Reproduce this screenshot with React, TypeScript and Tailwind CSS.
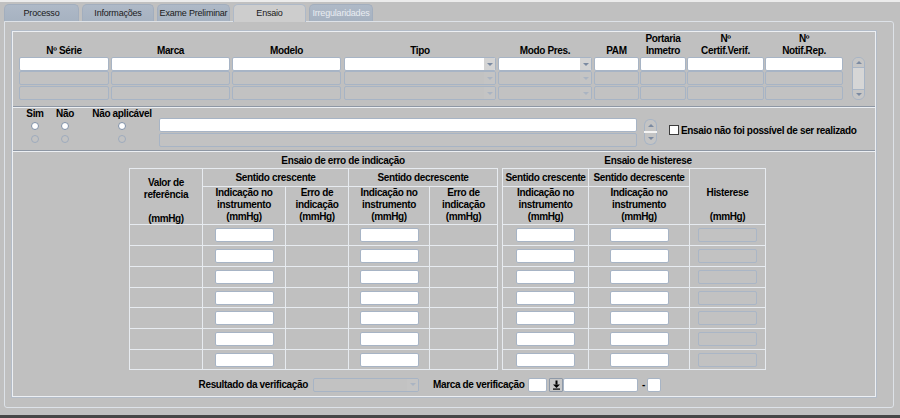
import React from "react";

const FONT = "font-['Liberation_Sans','Arial',sans-serif]";

function Field({ white, dd, cls }: { white?: boolean; dd?: boolean; cls: string }) {
  return (
    <div
      className={`${cls} flex justify-end border border-[#a7b4c5] rounded-[2px] overflow-hidden ${
        white ? "bg-white" : "bg-[#c2c2c2]"
      }`}
    >
      {dd && (
        <div
          className={`w-[11px] h-full flex items-center justify-center ${
            white ? "bg-[#d4d4d4]" : "bg-[#c4c4c4]"
          }`}
        >
          <div
            className={`w-0 h-0 border-l-[3px] border-r-[3px] border-t-[3px] border-l-transparent border-r-transparent ${
              white ? "border-t-[#7b8aa1]" : "border-t-[#aab4c2]"
            }`}
          />
        </div>
      )}
    </div>
  );
}

function Up() {
  return (
    <div className="w-0 h-0 border-l-[3px] border-r-[3px] border-b-[3px] border-l-transparent border-r-transparent border-b-[#7b8aa1]" />
  );
}
function Down() {
  return (
    <div className="w-0 h-0 border-l-[3px] border-r-[3px] border-t-[3px] border-l-transparent border-r-transparent border-t-[#7b8aa1]" />
  );
}

const cols = [
  { lines: ["Nº Série"], w: "w-[90px]", ml: "ml-[6px]", dd: false },
  { lines: ["Marca"], w: "w-[119px]", ml: "ml-[2px]", dd: false },
  { lines: ["Modelo"], w: "w-[109px]", ml: "ml-[2px]", dd: false },
  { lines: ["Tipo"], w: "w-[152px]", ml: "ml-[3px]", dd: true },
  { lines: ["Modo Pres."], w: "w-[94px]", ml: "ml-[2px]", dd: true },
  { lines: ["PAM"], w: "w-[45px]", ml: "ml-[2px]", dd: false },
  { lines: ["Portaria", "Inmetro"], w: "w-[46px]", ml: "ml-px", dd: false },
  { lines: ["Nº", "Certif.Verif."], w: "w-[77px]", ml: "ml-px", dd: false },
  { lines: ["Nº", "Notif.Rep."], w: "w-[78px]", ml: "ml-px", dd: false },
];

function Radio({ on }: { on?: boolean }) {
  return (
    <div
      className={`w-[8px] h-[8px] rounded-full border ${
        on ? "bg-white border-[#7f90a8]" : "bg-[#c2c2c2] border-[#9eabbd]"
      }`}
    />
  );
}

function RadioCol({ label, w, ml }: { label: string; w: string; ml: string }) {
  return (
    <div className={`${w} ${ml} flex flex-col items-center`}>
      <div className="leading-[11px] h-[11px] font-bold whitespace-nowrap">{label}</div>
      <div className="h-[13px] flex items-center justify-center">
        <Radio on />
      </div>
      <div className="h-[13px] flex items-center justify-center">
        <Radio />
      </div>
    </div>
  );
}

const rowIdx = [0, 1, 2, 3, 4, 5, 6];

function Cell({ children, cls = "" }: { children?: React.ReactNode; cls?: string }) {
  return <div className={`bg-[#c0c0c0] ${cls}`}>{children}</div>;
}

function Inp({ disabled }: { disabled?: boolean }) {
  return (
    <div
      className={`w-[59px] h-[14px] rounded-[2px] border ${
        disabled ? "bg-[#c2c2c2] border-[#aab6c6]" : "bg-white border-[#a7b4c5]"
      }`}
    />
  );
}

function Lines({ lines }: { lines: string[] }) {
  return (
    <>
      {lines.map((l, i) => (
        <div key={i} className="leading-[12px] h-[12px] whitespace-nowrap">
          {l}
        </div>
      ))}
    </>
  );
}

function Table1() {
  return (
    <div className="grid grid-cols-[72px_82px_62px_80px_67px] grid-rows-[17px_37px_20px_20px_20px_19px_20px_20px_19px] gap-px p-px bg-[#e7ebf0] font-bold">
      <Cell cls="row-span-2 flex flex-col items-center pt-[8px]">
        <Lines lines={["Valor de", "referência", "\u00a0", "(mmHg)"]} />
      </Cell>
      <Cell cls="col-span-2 flex items-center justify-center">Sentido crescente</Cell>
      <Cell cls="col-span-2 flex items-center justify-center">Sentido decrescente</Cell>
      <Cell cls="flex flex-col items-center">
        <Lines lines={["Indicação no", "instrumento", "(mmHg)"]} />
      </Cell>
      <Cell cls="flex flex-col items-center">
        <Lines lines={["Erro de", "indicação", "(mmHg)"]} />
      </Cell>
      <Cell cls="flex flex-col items-center">
        <Lines lines={["Indicação no", "instrumento", "(mmHg)"]} />
      </Cell>
      <Cell cls="flex flex-col items-center">
        <Lines lines={["Erro de", "indicação", "(mmHg)"]} />
      </Cell>
      {rowIdx.map((r) => (
        <React.Fragment key={r}>
          <Cell />
          <Cell cls="flex items-center justify-center">
            <Inp />
          </Cell>
          <Cell />
          <Cell cls="flex items-center justify-center">
            <Inp />
          </Cell>
          <Cell />
        </React.Fragment>
      ))}
    </div>
  );
}

function Table2() {
  return (
    <div className="ml-[4px] grid grid-cols-[85px_100px_75px] grid-rows-[17px_37px_20px_20px_20px_19px_20px_20px_19px] gap-px p-px bg-[#e7ebf0] font-bold">
      <Cell cls="flex items-center justify-center whitespace-nowrap">Sentido crescente</Cell>
      <Cell cls="flex items-center justify-center whitespace-nowrap">Sentido decrescente</Cell>
      <Cell cls="row-span-2 flex flex-col items-center pt-[18px]">
        <Lines lines={["Histerese", "\u00a0", "(mmHg)"]} />
      </Cell>
      <Cell cls="flex flex-col items-center">
        <Lines lines={["Indicação no", "instrumento", "(mmHg)"]} />
      </Cell>
      <Cell cls="flex flex-col items-center">
        <Lines lines={["Indicação no", "instrumento", "(mmHg)"]} />
      </Cell>
      {rowIdx.map((r) => (
        <React.Fragment key={r}>
          <Cell cls="flex items-center justify-center">
            <Inp />
          </Cell>
          <Cell cls="flex items-center justify-center">
            <Inp />
          </Cell>
          <Cell cls="flex items-center justify-center">
            <Inp disabled />
          </Cell>
        </React.Fragment>
      ))}
    </div>
  );
}

function Sep() {
  return <div className="h-[2px] border-t border-b border-t-[#8e97a4] border-b-[#eceff3]" />;
}

const tabs = [
  { label: "Processo", w: "w-[75px]", state: "normal" },
  { label: "Informações", w: "w-[72px]", state: "normal" },
  { label: "Exame Preliminar", w: "w-[73px]", state: "normal" },
  { label: "Ensaio", w: "w-[73px]", state: "active" },
  { label: "Irregularidades", w: "w-[64px]", state: "disabled" },
];

export default function App() {
  return (
    <div
      className={`w-[900px] h-[418px] bg-[#c0c0c0] overflow-hidden text-[10px] tracking-[-0.35px] text-black ${FONT}`}
    >
      <div className="h-[2px] bg-[#ececec]" />
      <div className="h-[2px]" />
      {/* tabs */}
      <div className="h-[17px] flex gap-[3px] pl-[4px] text-[9px] tracking-[-0.2px]">
        {tabs.map((t) => (
          <div
            key={t.label}
            className={`${t.w} rounded-t-[5px] flex items-center justify-center pt-[1px] whitespace-nowrap ${
              t.state === "active"
                ? "h-[18px] relative z-10 bg-[#cdcdcd] border border-b-0 border-[#aeb9c8] text-[#1a1a1a]"
                : t.state === "disabled"
                ? "h-[17px] bg-gradient-to-b from-[#aeb9c7] to-[#a6b2c1] border border-b-0 border-[#a2aebe] text-[#e9edf2]"
                : "h-[17px] bg-gradient-to-b from-[#aeb9c7] to-[#a6b2c1] border border-b-0 border-[#a2aebe] text-[#1a1a1a]"
            }`}
          >
            {t.label}
          </div>
        ))}
      </div>
      {/* tab panel */}
      <div className="ml-[4px] w-[890px] h-[387px] border border-[#dde2e8] rounded-b-[3px] rounded-tr-[3px] pl-[7px] pt-[9px] pr-[17px] pb-[10px]">
        <div className="w-[864px] h-[366px] border border-[#eceff3] shadow-[0_0_0_1px_#b3bcc8] flex flex-col">
          {/* section 1 */}
          <div className="h-[74px] flex">
            {cols.map((c, i) => (
              <div key={i} className={`flex flex-col ${c.w} ${c.ml}`}>
                <div className="h-[25px] flex flex-col justify-end items-center font-bold text-center">
                  <Lines lines={c.lines} />
                </div>
                <Field white dd={c.dd} cls="h-[14px]" />
                <Field dd={c.dd} cls="h-[14px]" />
                <Field dd={c.dd} cls="h-[14px] mt-px" />
              </div>
            ))}
            <div className="ml-[9px] w-[13px] pt-[25px]">
              <div className="h-[43px] flex flex-col rounded-[6px] border border-[#a7b4c5] overflow-hidden">
                <div className="h-[10px] bg-[#c6c6c6] border-b border-[#aab6c6] flex items-center justify-center">
                  <Up />
                </div>
                <div className="flex-1 bg-[#d6d6d6]" />
                <div className="h-[10px] bg-[#c6c6c6] border-t border-[#aab6c6] flex items-center justify-center">
                  <Down />
                </div>
              </div>
            </div>
          </div>
          <Sep />
          {/* section 2 */}
          <div className="h-[42px] flex">
            <RadioCol label="Sim" w="w-[24px]" ml="ml-[10px]" />
            <RadioCol label="Não" w="w-[24px]" ml="ml-[6px]" />
            <RadioCol label="Não aplicável" w="w-[60px]" ml="ml-[15px]" />
            <div className="ml-[7px] w-[478px] pt-[10px] flex flex-col gap-px">
              <Field white cls="h-[14px]" />
              <Field cls="h-[14px]" />
            </div>
            <div className="ml-[7px] w-[13px] pt-[11px] flex flex-col">
              <div className="h-[12px] rounded-t-[6px] border border-b-0 border-[#a7b4c5] bg-[#c4c4c4] flex items-center justify-center">
                <Up />
              </div>
              <div className="h-[2px] bg-[#f4f4f4]" />
              <div className="h-[12px] rounded-b-[6px] border border-t-0 border-[#a7b4c5] bg-[#c4c4c4] flex items-center justify-center">
                <Down />
              </div>
            </div>
            <div className="ml-[12px] mt-[16px] h-[12px] flex items-center">
              <div className="w-[10px] h-[10px] bg-white border border-[#3c3c3c]" />
              <div className="ml-[2px] font-bold whitespace-nowrap">Ensaio não foi possível de ser realizado</div>
            </div>
          </div>
          <Sep />
          {/* section 3 */}
          <div className="flex-1 flex flex-col">
            <div className="h-[16px] flex items-center font-bold">
              <div className="ml-[116px] w-[428px] text-center">Ensaio de erro de indicação</div>
              <div className="w-[182px] text-center">Ensaio de histerese</div>
            </div>
            <div className="flex ml-[116px]">
              <Table1 />
              <Table2 />
            </div>
            <div className="mt-[7px] h-[15px] flex items-center">
              <div className="w-[295px] text-right font-bold whitespace-nowrap">Resultado da verificação</div>
              <div className="ml-[5px] w-[106px]">
                <Field dd cls="h-[14px]" />
              </div>
              <div className="ml-[14px] font-bold whitespace-nowrap">Marca de verificação</div>
              <div className="ml-[4px] w-[19px] h-[14px] bg-white border border-[#a7b4c5] rounded-[2px]" />
              <div className="ml-[2px] w-[14px] h-[14px] bg-[#c8c8c8] border border-[#8e99a8] rounded-[1px] flex items-center justify-center">
                <svg width="9" height="10" viewBox="0 0 9 10">
                  <rect x="3.5" y="0.5" width="2" height="4" fill="#000" />
                  <path d="M1 4.5 L8 4.5 L4.5 8 Z" fill="#000" />
                  <rect x="1" y="8.5" width="7" height="1.2" fill="#000" />
                </svg>
              </div>
              <div className="w-[75px] h-[14px] bg-white border border-[#a7b4c5] rounded-[2px]" />
              <div className="ml-[2px] w-[6px] text-center font-bold leading-[11px]">-</div>
              <div className="ml-px w-[14px] h-[14px] bg-white border border-[#a7b4c5] rounded-[2px]" />
            </div>
          </div>
        </div>
      </div>
      <div className="h-[7px]" />
      <div className="h-[3px] bg-[#474747]" />
    </div>
  );
}
